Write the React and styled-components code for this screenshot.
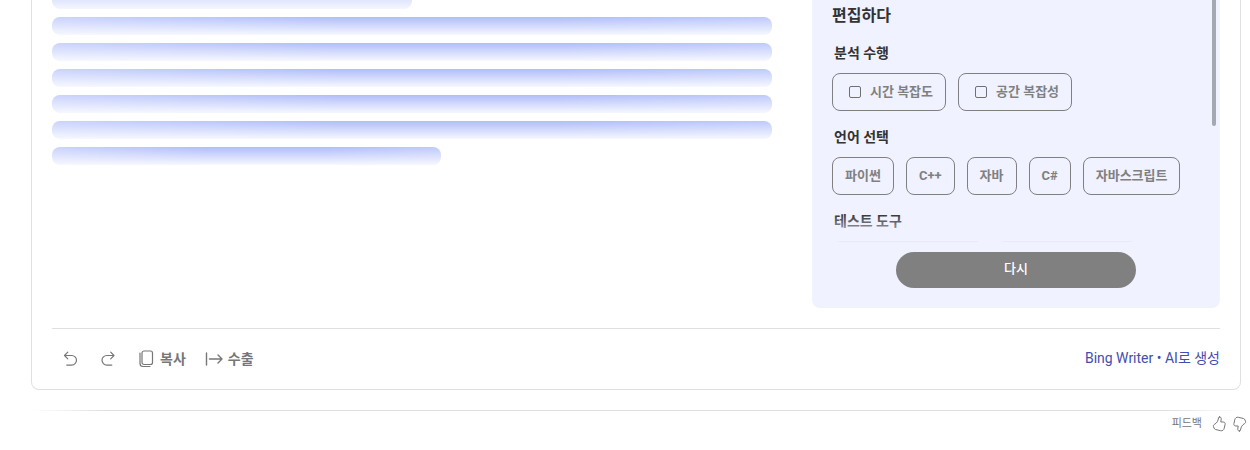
import { useState } from "react";
import styled, { createGlobalStyle } from "styled-components";

const GlobalStyle = createGlobalStyle`
  * {
    box-sizing: border-box;
  }
  body {
    margin: 0;
    background: #fff;
    overflow: hidden;
  }
  body,
  button {
    font-family: Roboto, "Noto Sans CJK KR", sans-serif;
  }
`;

const Page = styled.main`
  padding: 0 9px 0 31px;
`;

const Card = styled.section`
  padding: 0 20px;
  border: 1px solid #e0e0e0;
  border-top: none;
  border-radius: 0 0 8px 8px;
`;

const Columns = styled.div`
  display: flex;
  gap: 40px;
  padding-bottom: 20px;
`;

const Skeleton = styled.div`
  flex: 1;
  display: flex;
  flex-direction: column;
  gap: 8px;
`;

const Bar = styled.div`
  width: ${(props) => props.$width || "100%"};
  height: 18px;
  border-radius: 8px;
  background:
    linear-gradient(rgba(246, 248, 255, 0), #f6f8ff),
    linear-gradient(90deg, #cad3fc, #b0bdf9 40%, #b0bdf9 70%, #bfcafb);
`;

/* last strip of the line above the fold */
const CutBar = styled.div`
  width: 50%;
  height: 9px;
  border-radius: 0 0 8px 8px;
  background: linear-gradient(#e0e6fd, #f4f6ff);
`;

const Panel = styled.aside`
  width: 408px;
  padding-bottom: 20px;
  border-radius: 0 0 8px 8px;
  background: #f0f2ff;
`;

const Scroller = styled.div`
  position: relative;
  display: flex;
  justify-content: space-between;
  height: 242px;
  padding: 0 4px 0 20px;
  overflow: hidden;
`;

const Fade = styled.div`
  position: absolute;
  left: 0;
  right: 0;
  bottom: 0;
  height: 28px;
  background: linear-gradient(rgba(240, 242, 255, 0), rgba(240, 242, 255, 0.95));
`;

const ScrollThumb = styled.div`
  width: 4px;
  height: 126px;
  border-radius: 0 0 2px 2px;
  background: #a4a8b2;
`;

const PanelTitle = styled.h2`
  margin: 0;
  padding: 4px 0 11px;
  color: #333;
  font-size: 16px;
  font-weight: 700;
  line-height: 24px;
`;

const Group = styled.fieldset`
  margin: 0;
  padding: 0 0 12px;
  border: none;
`;

const GroupTitle = styled.legend`
  padding: 0 2px;
  margin-bottom: 6px;
  color: #333;
  font-size: 14px;
  font-weight: 700;
  line-height: 28px;
`;

const ChipRow = styled.div`
  display: flex;
  gap: 12px;
`;

const chip = `
  display: flex;
  align-items: center;
  height: 38px;
  padding: 0 12px;
  border: 1px solid #808080;
  border-radius: 8px;
  background: none;
  color: #808080;
  font-size: 13px;
  font-weight: 700;
  line-height: 20px;
  white-space: nowrap;
  cursor: pointer;
`;

const Chip = styled.button`
  ${chip}
  min-width: ${(props) => props.$min || "0"};
`;

const CheckChip = styled.label`
  ${chip}
  gap: 9px;
  padding-left: 16px;
`;

const Check = styled.input`
  appearance: none;
  width: 12px;
  height: 12px;
  margin: 0;
  border: 1px solid #707070;
  border-radius: 2px;
  &:checked {
    background: #707070;
  }
`;

const Retry = styled.button`
  display: block;
  width: 240px;
  height: 36px;
  margin: 10px auto 0;
  padding: 0 0 2px;
  border: none;
  border-radius: 18px;
  background: #808080;
  color: #fff;
  font-size: 13px;
  font-weight: 500;
  line-height: 20px;
`;

const Footer = styled.footer`
  display: flex;
  align-items: center;
  height: 61px;
  border-top: 1px solid #e0e0e0;
`;

const Tools = styled.div`
  display: flex;
  margin-left: -1px;
`;

const Tool = styled.button`
  display: flex;
  align-items: center;
  gap: 4px;
  height: 36px;
  padding: 0 9px;
  border: none;
  background: none;
  color: #777;
  font-size: 14px;
  font-weight: 700;
  line-height: 20px;
`;

const Credit = styled.p`
  margin: 0 0 0 auto;
  padding-bottom: 2px;
  color: #444db0;
  font-size: 14px;
  line-height: 20px;
`;

const Rule = styled.hr`
  height: 1px;
  margin: 20px 0 0;
  border: none;
  background: linear-gradient(90deg, transparent, #e0e0e0 6%, #e0e0e0 94%, transparent);
`;

const Feedback = styled.div`
  display: flex;
  align-items: center;
  justify-content: flex-end;
  gap: 5px;
  height: 26px;
  margin-right: -7px;
  color: #767676;
  font-size: 11px;
  line-height: 16px;
`;

const Thumb = styled.button`
  display: flex;
  padding: 0;
  border: none;
  background: none;
  color: #767676;
`;

const FeedbackLabel = styled.span`
  margin-right: 4px;
`;

const Icon = ({ size = 20, children }) => (
  <svg
    width={size}
    height={size}
    viewBox={`0 0 ${size} ${size}`}
    fill="none"
    stroke="currentColor"
    strokeWidth="1.2"
    strokeLinecap="round"
    strokeLinejoin="round"
    aria-hidden="true"
  >
    {children}
  </svg>
);

const UndoIcon = () => (
  <Icon>
    <path d="M7.8 3.2L4.5 6.5L7.8 9.8M4.5 6.5H11.7a4.7 4.7 0 0 1 0 9.6H6.7" />
  </Icon>
);

const RedoIcon = () => (
  <Icon>
    <path d="M12.7 3.2L16 6.5L12.7 9.8M16 6.5H8.8a4.7 4.7 0 0 0 0 9.6H13.8" />
  </Icon>
);

const CopyIcon = () => (
  <Icon>
    <rect x="6" y="2" width="10.5" height="13.5" rx="2" />
    <path d="M4 4v10.5a3 3 0 0 0 3 3h7" />
  </Icon>
);

const ExportIcon = () => (
  <Icon>
    <path strokeWidth="1.4" d="M2.5 4v12M5.5 10H18M14 6l4 4l-4 4" />
  </Icon>
);

const ThumbIcon = () => (
  <Icon size={16}>
    <path
      strokeWidth="1"
      d="M8.6 .9c1.2 0 1.8 1 1.6 2.2L9.8 6h2.4c1.4 0 2.2 1 1.9 2.3l-.9 4c-.4 1.8-1.8 2.8-3.6 2.4l-5-1.2c-.8-.2-1.3-.7-1.6-1.5l-.5-1.4c-.3-.9 0-1.6.8-2.1C6 7 7 5 7.5 2c.1-.7.5-1.1 1.1-1.1z"
    />
  </Icon>
);

const Flip = styled.span`
  display: flex;
  transform: rotate(180deg);
`;

const languages = ["파이썬", "C++", "자바", "C#", "자바스크립트"];
const analyses = ["시간 복잡도", "공간 복잡성"];

export default function App() {
  const [language, setLanguage] = useState(null);
  return (
    <>
      <GlobalStyle />
      <Page>
        <Card>
          <Columns>
            <Skeleton>
              <CutBar />
              <Bar />
              <Bar />
              <Bar />
              <Bar />
              <Bar />
              <Bar $width="54%" />
            </Skeleton>
            <Panel>
              <Scroller>
                <div>
                  <PanelTitle>편집하다</PanelTitle>
                  <Group>
                    <GroupTitle>분석 수행</GroupTitle>
                    <ChipRow>
                      {analyses.map((name) => (
                        <CheckChip key={name}>
                          <Check type="checkbox" />
                          {name}
                        </CheckChip>
                      ))}
                    </ChipRow>
                  </Group>
                  <Group>
                    <GroupTitle>언어 선택</GroupTitle>
                    <ChipRow>
                      {languages.map((name) => (
                        <Chip
                          key={name}
                          type="button"
                          aria-pressed={language === name}
                          onClick={() => setLanguage(name)}
                        >
                          {name}
                        </Chip>
                      ))}
                    </ChipRow>
                  </Group>
                  <Group>
                    <GroupTitle>테스트 도구</GroupTitle>
                    <ChipRow>
                      <Chip type="button" $min="152px" />
                      <Chip type="button" $min="142px" />
                    </ChipRow>
                  </Group>
                </div>
                <ScrollThumb />
                <Fade />
              </Scroller>
              <Retry type="button">다시</Retry>
            </Panel>
          </Columns>
          <Footer>
            <Tools>
              <Tool type="button" aria-label="undo">
                <UndoIcon />
              </Tool>
              <Tool type="button" aria-label="redo">
                <RedoIcon />
              </Tool>
              <Tool type="button">
                <CopyIcon />
                복사
              </Tool>
              <Tool type="button">
                <ExportIcon />
                수출
              </Tool>
            </Tools>
            <Credit>Bing Writer • AI로 생성</Credit>
          </Footer>
        </Card>
        <Rule />
        <Feedback>
          <FeedbackLabel>피드백</FeedbackLabel>
          <Thumb type="button" aria-label="like">
            <ThumbIcon />
          </Thumb>
          <Thumb type="button" aria-label="dislike">
            <Flip>
              <ThumbIcon />
            </Flip>
          </Thumb>
        </Feedback>
      </Page>
    </>
  );
}
